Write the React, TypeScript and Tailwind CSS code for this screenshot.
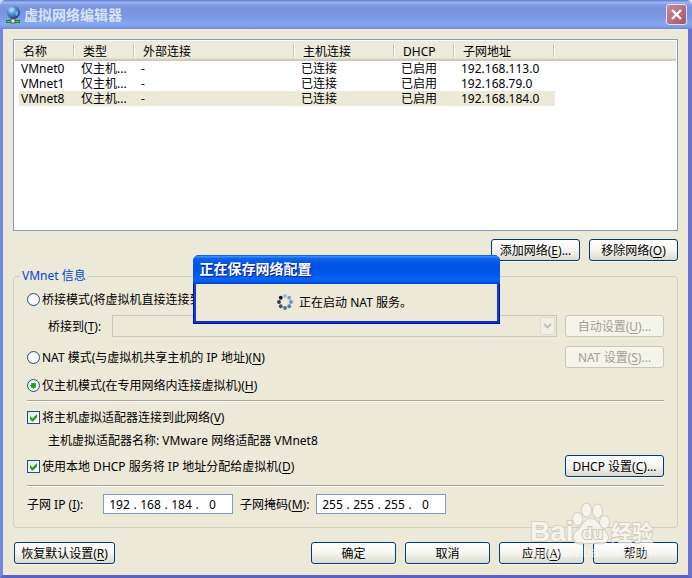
import type { ReactNode } from 'react'
import clsx from 'clsx'

const adapters = [
  { name: 'VMnet0', type: '仅主机...', external: '-', host: '已连接', dhcp: '已启用', subnet: '192.168.113.0' },
  { name: 'VMnet1', type: '仅主机...', external: '-', host: '已连接', dhcp: '已启用', subnet: '192.168.79.0' },
  { name: 'VMnet8', type: '仅主机...', external: '-', host: '已连接', dhcp: '已启用', subnet: '192.168.184.0' },
]

const headers = ['名称', '类型', '外部连接', '主机连接', 'DHCP', '子网地址']

// Text followed by its keyboard accelerator, e.g. 应用(A)
function Accel({ text, k, tail }: { text: string; k: string; tail?: string }) {
  return (
    <span>
      {text}(<u className="underline-offset-2">{k}</u>){tail}
    </span>
  )
}

function Button({ children, className, disabled }: { children: ReactNode; className?: string; disabled?: boolean }) {
  return (
    <button
      type="button"
      disabled={disabled}
      className={clsx(
        'flex h-[22px] shrink-0 items-center justify-center rounded-[3px] border whitespace-nowrap',
        disabled
          ? 'border-[#c9c7ba] bg-[#f5f4ea] text-[#a1a192]'
          : 'border-[#003c74] bg-linear-to-b from-white via-[#f5f5f1] to-[#dddace] text-black shadow-[0_1px_0_#f8f7f0]',
        className,
      )}
    >
      {children}
    </button>
  )
}

function Radio({ id, checked, children }: { id: string; checked?: boolean; children: ReactNode }) {
  return (
    <div className="flex h-5 items-center">
      <input
        type="radio"
        id={id}
        name="mode"
        defaultChecked={checked}
        className="peer size-[13px] appearance-none rounded-full border border-[#1d5281] bg-[radial-gradient(circle,#fff_50%,#dcdcd7)] checked:bg-[radial-gradient(circle,#21a121_0_2px,#55c455_3px,#fff_3px,#e6e6e1)]"
      />
      <label htmlFor={id} className="ml-[2px] whitespace-nowrap">{children}</label>
    </div>
  )
}

function Checkbox({ id, children }: { id: string; children: ReactNode }) {
  return (
    <div className="flex h-5 items-center">
      <span className="relative flex">
        <input
          type="checkbox"
          id={id}
          defaultChecked
          className="peer size-[13px] appearance-none border border-[#1d5281] bg-linear-to-br from-[#e4e4df] to-white"
        />
        <svg viewBox="0 0 13 13" className="pointer-events-none absolute inset-0 hidden size-[13px] peer-checked:block">
          <path d="M3 5v3l2 2.500h1l4-4V3L5.500 7.500z" fill="#21a121" />
        </svg>
      </span>
      <label htmlFor={id} className="ml-[2px] whitespace-nowrap">{children}</label>
    </div>
  )
}

function IpField({ label, octets }: { label: string; octets: string[] }) {
  return (
    <div role="group" aria-label={label} className="flex h-5 w-[130px] items-center border border-[#7f9db9] bg-white pl-[2px]">
      {octets.map((octet, i) => (
        <div key={i} className="flex">
          <input
            type="text"
            aria-label={`${label} ${i + 1}`}
            defaultValue={octet}
            className="w-[27px] bg-transparent p-0 text-center outline-none"
          />
          {i < 3 && <span className="w-1 text-center">.</span>}
        </div>
      ))}
    </div>
  )
}

function Divider() {
  return <div className="h-[2px] border-t border-b border-t-[#aca899] border-b-white" />
}

function GlobeIcon() {
  return (
    <svg viewBox="0 0 16 18" className="h-[18px] w-4 shrink-0">
      <defs>
        <radialGradient id="globe" cx="0.35" cy="0.3" r="0.75">
          <stop offset="0" stopColor="#d5ebff" />
          <stop offset="0.4" stopColor="#5595dd" />
          <stop offset="1" stopColor="#103b91" />
        </radialGradient>
      </defs>
      <circle cx="7.500" cy="6.500" r="6.500" fill="url(#globe)" />
      <path d="M4 3l3-1 2 1-2 2-3 1zM9 6l3-1v4l-2 1z" fill="#a9cdf3" opacity="0.6" />
      <rect x="6" y="12" width="3" height="3" fill="#555" />
      <rect x="0" y="14" width="14" height="3" fill="#108a1c" />
      <rect x="1" y="15" width="12" height="1" fill="#4fd35c" />
      <rect x="5" y="13" width="4" height="4" fill="#ece9d8" stroke="#444" strokeWidth="0.800" />
    </svg>
  )
}

const dots = ['#a3b8d8', '#7f9cca', '#6d8fc3', '#5a7aac', '#4c6795', '#3c5070', '#2c3849', '#111820']

function Spinner() {
  return (
    <svg viewBox="0 0 16 16" className="size-4 shrink-0">
      {dots.map((fill, i) => {
        const a = (i * Math.PI) / 4
        return <circle key={fill} cx={8 + 6 * Math.sin(a)} cy={8 - 6 * Math.cos(a)} r="1.900" fill={fill} />
      })}
    </svg>
  )
}

function SavingDialog() {
  return (
    <div className="absolute inset-0 flex items-center justify-center">
      <div role="dialog" aria-label="正在保存网络配置" className="w-[307px] rounded-t-[6px] bg-[#0831d9]">
        <div className="flex h-[29px] items-center rounded-t-[6px] bg-[linear-gradient(to_bottom,#0048d0_0%,#3a8dff_5%,#1065ee_12%,#0054e3_30%,#0055e8_60%,#0466fb_85%,#0358e8_93%,#0040bd_100%)] pl-[7px]">
          <h2 className="text-sm leading-5 font-bold text-white [text-shadow:1px_1px_0_#0a1883]">正在保存网络配置</h2>
        </div>
        <div className="border-x border-b border-[#00138c]">
          <div className="border-x-2 border-b-2 border-x-[#0a3fe0] border-b-[#0831d9]">
            <div className="flex h-[37px] items-center justify-center bg-[#ece9d8]">
              <Spinner />
              <span className="ml-1.5 pr-[3px]">正在启动 NAT 服务。</span>
            </div>
          </div>
        </div>
      </div>
    </div>
  )
}

function Watermark() {
  return (
    <svg viewBox="0 0 128 62" className="pointer-events-none absolute right-[36px] bottom-[15px] h-[62px] w-32" opacity="0.850">
      <g fill="#f8f7f2" stroke="#cfccbe" strokeWidth="2" strokeLinejoin="round" paintOrder="stroke" fontFamily="'Liberation Sans','Noto Sans CJK SC',sans-serif" fontWeight="700">
        <text x="2" y="40" fontSize="28">Bai</text>
        <ellipse cx="58.500" cy="9" rx="4.500" ry="6.500" />
        <ellipse cx="69.500" cy="10" rx="4.500" ry="6.500" />
        <ellipse cx="49.500" cy="18" rx="4.500" ry="6" />
        <ellipse cx="76.500" cy="21" rx="4.500" ry="6" />
        <path d="M63 18c-6 0-8 6-12 10-4 3-6 6-5 10 1 5 6 5 10 4h14c5 1 9 0 10-5 0-5-4-7-7-11-3-4-5-8-10-8z" />
        <text x="54" y="38" fontSize="17" stroke="#c4c0b0">du</text>
        <text x="83" y="39" fontSize="21">经验</text>
      </g>
      <text x="3" y="56" fontSize="15" fill="#fff" opacity="0.700" fontFamily="'Liberation Sans',sans-serif">jingyan.baidu.com</text>
    </svg>
  )
}

export default function App() {
  return (
    <div className="relative bg-[#d6def5] font-['Noto_Sans','Noto_Sans_CJK_SC',sans-serif] text-xs leading-[15px] text-black">
      <div className="overflow-hidden rounded-t-[6px] bg-[#7488df]">
        <header className="flex h-[29px] items-center bg-[linear-gradient(to_bottom,#5c74d6_0%,#9db8ee_8%,#809ae4_18%,#7a93df_30%,#7b95e2_55%,#86a8ee_80%,#7f9be4_92%,#7088d6_100%)] pr-[5px] pl-1.5">
          <GlobeIcon />
          <h1 className="ml-[2px] flex-1 text-sm leading-5 font-bold text-[#d8e4f8]">虚拟网络编辑器</h1>
          <button
            type="button"
            aria-label="关闭"
            className="flex size-[21px] items-center justify-center rounded-[3px] border border-[#dde4f8] bg-linear-to-br from-[#c98a99] to-[#a9546a]"
          >
            <svg viewBox="0 0 11 11" className="size-[11px]">
              <path d="M1 1l9 9M10 1l-9 9" stroke="#fff" strokeWidth="2.400" />
            </svg>
          </button>
        </header>

        <main className="border-r-[4px] border-b-[3px] border-l-[3px] border-r-[#6a72d0] border-b-[#5a62c4] border-l-[#7488df] bg-[#ece9d8] px-2.5 pt-2.5 pb-[11px]">
          <div className="min-h-48 border border-[#7f9db9] bg-white p-px">
            <table className="w-full table-fixed border-separate border-spacing-0 text-left">
              <colgroup>
                <col className="w-[60px]" />
                <col className="w-[60px]" />
                <col className="w-[160px]" />
                <col className="w-[100px]" />
                <col className="w-[60px]" />
                <col className="w-[100px]" />
                <col />
              </colgroup>
              <thead>
                <tr className="h-5 bg-[linear-gradient(to_bottom,#ebeadb_85%,#d6d2c2_90%,#cbc7b8)]">
                  {headers.map((h) => (
                    <th key={h} className="relative p-0 pl-2 font-normal">
                      {h}
                      <span className="absolute top-[3px] right-0 h-[13px] w-[2px] border-r border-l border-r-white border-l-[#c7c5b2]" />
                    </th>
                  ))}
                  <th className="p-0" />
                </tr>
              </thead>
              <tbody>
                {adapters.map((a, i) => (
                  <tr key={a.name} className={clsx('h-[15px] whitespace-nowrap *:bg-clip-padding *:py-0 *:pr-0', i === 2 && '*:bg-[#ece9d8]')}>
                    <td className="border-l-4 border-transparent pl-[2px]">{a.name}</td>
                    <td className="pl-1.5">{a.type}</td>
                    <td className="pl-1.5">{a.external}</td>
                    <td className="pl-1.5">{a.host}</td>
                    <td className="pl-1.5">{a.dhcp}</td>
                    <td className="pl-1.5">{a.subnet}</td>
                  </tr>
                ))}
              </tbody>
            </table>
          </div>

          <div className="mt-2 flex justify-end gap-[9px]">
            <Button className="w-[89px]"><Accel text="添加网络" k="E" tail="..." /></Button>
            <Button className="w-[89px]"><Accel text="移除网络" k="O" /></Button>
          </div>

          <fieldset className="mt-[7px] rounded-[4px] border border-[#d0d0bf]">
            <legend className="ml-1.5 h-4 px-[2px] text-[#0046d5]">VMnet 信息</legend>
            <div className="px-[13px] pt-[5px] pb-[13px]">
              <Radio id="bridged"><Accel text="桥接模式(将虚拟机直接连接到外部网络)" k="B" /></Radio>
              <div className="mt-1.5 flex items-center pl-[21px]">
                <label htmlFor="bridge-to" className="w-16 whitespace-nowrap"><Accel text="桥接到" k="T" tail=":" /></label>
                <div className="relative flex flex-1">
                  <select id="bridge-to" disabled className="h-[22px] w-full appearance-none border border-[#c9c7ba] bg-[#ece9d8]" />
                  <span className="pointer-events-none absolute top-[2px] right-[2px] flex h-[18px] w-[15px] items-center justify-center rounded-[2px] border border-[#dddbcf] bg-[#f0efe6]">
                    <svg viewBox="0 0 9 6" className="h-1.5 w-[9px]">
                      <path d="M1 1l3.500 3.500L8 1" fill="none" stroke="#c3c2b5" strokeWidth="2" />
                    </svg>
                  </span>
                </div>
                <Button disabled className="ml-2 w-[99px]"><Accel text="自动设置" k="U" tail="..." /></Button>
              </div>
              <div className="mt-[9px] flex items-center justify-between">
                <Radio id="nat"><Accel text="NAT 模式(与虚拟机共享主机的 IP 地址)" k="N" /></Radio>
                <Button disabled className="w-[99px]"><Accel text="NAT 设置" k="S" tail="..." /></Button>
              </div>
              <div className="mt-[7px] mb-[5px]">
                <Radio id="host-only" checked><Accel text="仅主机模式(在专用网络内连接虚拟机)" k="H" /></Radio>
              </div>
              <Divider />
              <div className="mt-[5px]">
                <Checkbox id="connect"><Accel text="将主机虚拟适配器连接到此网络" k="V" /></Checkbox>
              </div>
              <p className="mt-1 h-5 pl-[21px] leading-5">主机虚拟适配器名称: VMware 网络适配器 VMnet8</p>
              <div className="mt-1 mb-2 flex items-center justify-between">
                <Checkbox id="dhcp"><Accel text="使用本地 DHCP 服务将 IP 地址分配给虚拟机" k="D" /></Checkbox>
                <Button className="w-[99px]"><Accel text="DHCP 设置" k="C" tail="..." /></Button>
              </div>
              <Divider />
              <div className="mt-[7px] flex items-center">
                <span className="w-[76px]"><Accel text="子网 IP " k="I" tail=":" /></span>
                <IpField label="子网 IP" octets={['192', '168', '184', '0']} />
                <span className="ml-[7px] w-[76px]"><Accel text="子网掩码" k="M" tail=":" /></span>
                <IpField label="子网掩码" octets={['255', '255', '255', '0']} />
              </div>
            </div>
          </fieldset>

          <footer className="mt-3.5 flex gap-[9px]">
            <Button className="mr-auto ml-px w-[101px]"><Accel text="恢复默认设置" k="R" /></Button>
            <Button className="w-[85px]">确定</Button>
            <Button className="w-[85px]">取消</Button>
            <Button className="w-[85px]"><Accel text="应用" k="A" /></Button>
            <Button className="w-[85px]">帮助</Button>
          </footer>
        </main>
      </div>

      <SavingDialog />
      <Watermark />
    </div>
  )
}
